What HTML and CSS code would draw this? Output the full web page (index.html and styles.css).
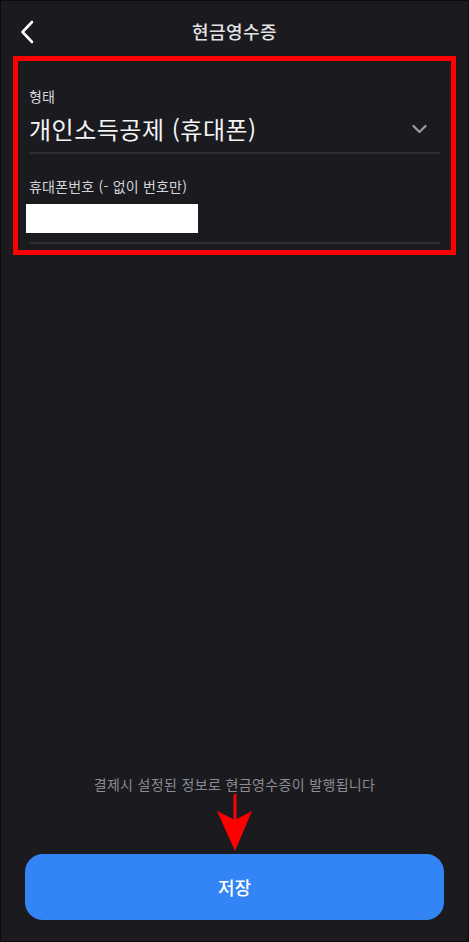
FILE: index.html
```html
<!DOCTYPE html>
<html lang="ko">
  <head>
    <meta charset="UTF-8" />
    <meta name="viewport" content="width=device-width, initial-scale=1.0" />
    <title>현금영수증</title>
    <link rel="stylesheet" href="styles.css">
  </head>
  <body>
    <div class="screen">
      <header class="topbar">
        <button class="back" type="button" aria-label="뒤로">
          <svg width="14" height="24" viewBox="0 0 14 24">
            <path d="M12 2 L2.5 12 L12 22" fill="none" stroke="#fff" stroke-width="2.6" stroke-linecap="round" stroke-linejoin="round" />
          </svg>
        </button>
        <h1>현금영수증</h1>
      </header>

      <main class="content">
        <div class="form-box">
          <div class="field">
            <label class="field-label">형태</label>
            <div class="select-row">
              <span class="select-value">개인소득공제 (휴대폰)</span>
              <svg class="chevron" width="15" height="10" viewBox="0 0 15 10">
                <path d="M1.5 2 L7.5 8 L13.5 2" fill="none" stroke="#9a9ca4" stroke-width="2.2" stroke-linecap="round" stroke-linejoin="round" />
              </svg>
            </div>
            <div class="divider"></div>
          </div>
          <div class="field field-phone">
            <label class="field-label" for="phone">휴대폰번호 (- 없이 번호만)</label>
            <div class="masked"></div>
            <div class="divider"></div>
          </div>
        </div>
      </main>

      <footer class="bottom">
        <p class="notice">결제시 설정된 정보로 현금영수증이 발행됩니다</p>
        <svg class="pointer" width="40" height="60" viewBox="0 0 40 60">
          <rect x="18.5" y="0" width="3" height="28" fill="#ff0000" />
          <polygon points="2,17 20,26 37,17 20,57" fill="#ff0000" />
        </svg>
        <button class="save" type="button">저장</button>
      </footer>
    </div>
  </body>
</html>
```

FILE: styles.css
```css
body {
  margin: 0;
  background: #0c0c0e;
  font-family: "Noto Sans CJK KR", "Noto Sans", sans-serif;
}
.screen {
  box-sizing: border-box;
  width: 469px;
  height: 942px;
  border: 1px solid #0b0b0d;
  background: #1a1a1f;
  display: flex;
  flex-direction: column;
}
.topbar {
  height: 55px;
  position: relative;
  display: flex;
  align-items: center;
  justify-content: center;
}
.topbar h1 {
  margin: 0;
  font-size: 18px;
  font-weight: 500;
  color: #e2e2e4;
  letter-spacing: 0.4px;
  margin-top: 5px;
}
.back {
  position: absolute;
  left: 19px;
  top: 19px;
  padding: 0;
  border: none;
  background: none;
  display: flex;
}
.content {
  flex: 1;
}
.form-box {
  margin: 0 12px;
  border: 5px solid #ff0000;
  padding: 0 11px 6px;
}
.field {
  display: flex;
  flex-direction: column;
}
.field-label {
  font-size: 14px;
  line-height: 20px;
  color: #d4d4d8;
  margin-top: 25px;
  letter-spacing: 0.2px;
}
.field-phone .field-label {
  margin-top: 22px;
}
.select-row {
  display: flex;
  align-items: center;
  justify-content: space-between;
  margin-top: 8px;
}
.select-value {
  font-size: 24px;
  line-height: 30px;
  color: #f4f4f6;
  font-weight: 400;
  letter-spacing: 0.5px;
}
.chevron {
  margin-right: 13px;
}
.divider {
  height: 2px;
  background: #2d2d33;
  margin-top: 8px;
}
.masked {
  width: 172px;
  height: 29px;
  background: #fff;
  margin: 8px 0 1px -3px;
}
.bottom {
  position: relative;
  display: flex;
  flex-direction: column;
  align-items: center;
  padding: 0 24px 21px;
}
.notice {
  margin: 0;
  font-size: 14px;
  line-height: 20px;
  color: #8c8c92;
  letter-spacing: 0.35px;
}
.pointer {
  position: absolute;
  left: 214px;
  top: 20px;
}
.save {
  margin-top: 60px;
  width: 100%;
  height: 66px;
  border: none;
  border-radius: 18px;
  background: #3385f5;
  color: #fff;
  font-family: inherit;
  font-size: 18px;
  font-weight: 500;
}
```
